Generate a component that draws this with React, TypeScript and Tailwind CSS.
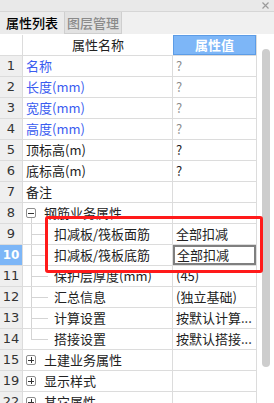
import React from 'react';

type Row = {
    no: string;
    name: string;
    value?: string;
    kind?: 'blue' | 'plain' | 'group' | 'child' | 'last';
    open?: boolean;
    valueColor?: string;
    selected?: boolean;
};

const rows: Row[] = [
    { no: '1', name: '名称', value: '?', kind: 'blue', valueColor: 'text-[#8c8c8c]' },
    { no: '2', name: '长度(mm)', value: '?', kind: 'blue', valueColor: 'text-[#8c8c8c]' },
    { no: '3', name: '宽度(mm)', value: '?', kind: 'blue', valueColor: 'text-[#8c8c8c]' },
    { no: '4', name: '高度(mm)', value: '?', kind: 'blue', valueColor: 'text-[#8c8c8c]' },
    { no: '5', name: '顶标高(m)', value: '?', kind: 'plain' },
    { no: '6', name: '底标高(m)', value: '?', kind: 'plain' },
    { no: '7', name: '备注', value: '', kind: 'plain' },
    { no: '8', name: '钢筋业务属性', kind: 'group', open: true },
    { no: '9', name: '扣减板/筏板面筋', value: '全部扣减', kind: 'child' },
    { no: '10', name: '扣减板/筏板底筋', value: '全部扣减', kind: 'child', selected: true },
    { no: '11', name: '保护层厚度(mm)', value: '(45)', kind: 'child' },
    { no: '12', name: '汇总信息', value: '(独立基础)', kind: 'child' },
    { no: '13', name: '计算设置', value: '按默认计算...', kind: 'child' },
    { no: '14', name: '搭接设置', value: '按默认搭接...', kind: 'last' },
    { no: '15', name: '土建业务属性', kind: 'group', open: false },
    { no: '19', name: '显示样式', kind: 'group', open: false },
    { no: '22', name: '其它属性', kind: 'group', open: false },
];

const ToggleBox = ({ open }: { open?: boolean }) => (
    <div className="relative w-[10px] h-[10px] border border-[#8e8e8e] rounded-[2px] bg-white flex items-center justify-center shrink-0">
        <div className="w-[6px] h-px bg-[#333]" />
        {!open && <div className="absolute w-px h-[6px] bg-[#333]" />}
    </div>
);

const Connector = ({ last }: { last?: boolean }) => (
    <div className="relative w-[18px] h-full shrink-0">
        <div className={`absolute left-0 top-0 w-px bg-[#d4d4d4] ${last ? 'h-1/2' : 'h-full'}`} />
        <div className="absolute left-0 top-1/2 w-[17px] h-px bg-[#d4d4d4]" />
    </div>
);

const App: React.FC = () => {
    return (
        <div
            className="relative w-[274px] h-[403px] overflow-hidden bg-white text-[12px]"
            style={{ fontFamily: '"Noto Sans CJK SC", "Noto Sans", sans-serif' }}
        >
            {/* Title strip */}
            <div className="h-[12px] bg-[#e9e9e9] border-b border-[#d6d6d6] flex justify-end items-center pr-[5px]">
                <svg width="7" height="7" viewBox="0 0 7 7" className="text-[#9a9a9a]">
                    <path d="M0.5 0.5 L6.5 6.5 M6.5 0.5 L0.5 6.5" stroke="currentColor" strokeWidth="1.2" />
                </svg>
            </div>

            {/* Tabs */}
            <div className="h-[22px] bg-[#f0f0f0] flex items-stretch">
                <div className="w-[65px] bg-[#ebebeb] border-r border-[#cfcfcf] flex items-center justify-center text-[13px] font-medium text-black">
                    属性列表
                </div>
                <div className="w-[57px] bg-[#e2e2e2] border-r border-b border-[#cfcfcf] flex items-center justify-center text-[13px] font-medium text-[#8a8a8a]">
                    图层管理
                </div>
            </div>

            <div className="flex mt-[1px]">
                {/* Table */}
                <div className="w-[257px] border-r border-[#dcdcdc]">
                    {/* Header */}
                    <div className="flex h-[21px] border-b border-[#dcdcdc]">
                        <div className="w-[23px] border-r border-[#dcdcdc]" />
                        <div className="w-[150px] flex items-center justify-center text-[13px] text-[#222]">属性名称</div>
                        <div className="flex-1 bg-[#7db6f7] border border-[#5c9ce6] flex items-center justify-center text-white font-bold text-[13px]">
                            属性值
                        </div>
                    </div>

                    {rows.map((r) => (
                        <div key={r.no} className="flex h-[21px] border-b border-[#dcdcdc]">
                            <div
                                className={`w-[23px] border-r border-[#dcdcdc] flex items-center justify-center ${
                                    r.selected ? 'bg-[#7db6f7] text-white font-bold text-[12px]' : 'bg-[#efefef] text-[#333] text-[13px]'
                                }`}
                                style={{ fontFamily: '"DejaVu Sans", sans-serif' }}
                            >
                                {r.no}
                            </div>
                            <div className="w-[150px] border-r border-[#dcdcdc] flex items-center h-full whitespace-nowrap overflow-hidden">
                                {r.kind === 'group' && (
                                    <div className="relative flex items-center h-full pl-[3px]">
                                        <ToggleBox open={r.open} />
                                        {r.open && <div className="absolute left-[8px] top-[15px] bottom-0 w-px bg-[#d4d4d4]" />}
                                        <span className="ml-[8px] text-[13px] text-[#222]">{r.name}</span>
                                    </div>
                                )}
                                {(r.kind === 'child' || r.kind === 'last') && (
                                    <div className="flex items-center h-full pl-[8px]">
                                        <Connector last={r.kind === 'last'} />
                                        <span className="ml-[5px] text-[13px] text-[#222]">{r.name}</span>
                                    </div>
                                )}
                                {r.kind === 'blue' && <span className="pl-[3px] text-[13px] text-[#3a5cf0]">{r.name}</span>}
                                {r.kind === 'plain' && <span className="pl-[3px] text-[13px] text-[#222]">{r.name}</span>}
                            </div>
                            <div
                                className={`flex-1 flex items-center text-[13px] whitespace-nowrap overflow-hidden ${
                                    r.selected ? 'border-2 border-[#7f7f7f] pl-[2px]' : 'pl-[3px]'
                                } ${r.valueColor ?? 'text-[#222]'}`}
                            >
                                {r.value}
                            </div>
                        </div>
                    ))}
                </div>

                {/* Scrollbar */}
                <div className="w-[17px] pl-[5px] pt-[14px]">
                    <div className="w-[8px] h-[318px] bg-[#cdcdcd] rounded-full" />
                </div>
            </div>

            {/* Highlight box */}
            <div className="absolute left-[45px] top-[216px] w-[218px] h-[57px] border-[3px] border-[#ff1a1a] rounded-[3px]" />
        </div>
    );
};

export default App;
